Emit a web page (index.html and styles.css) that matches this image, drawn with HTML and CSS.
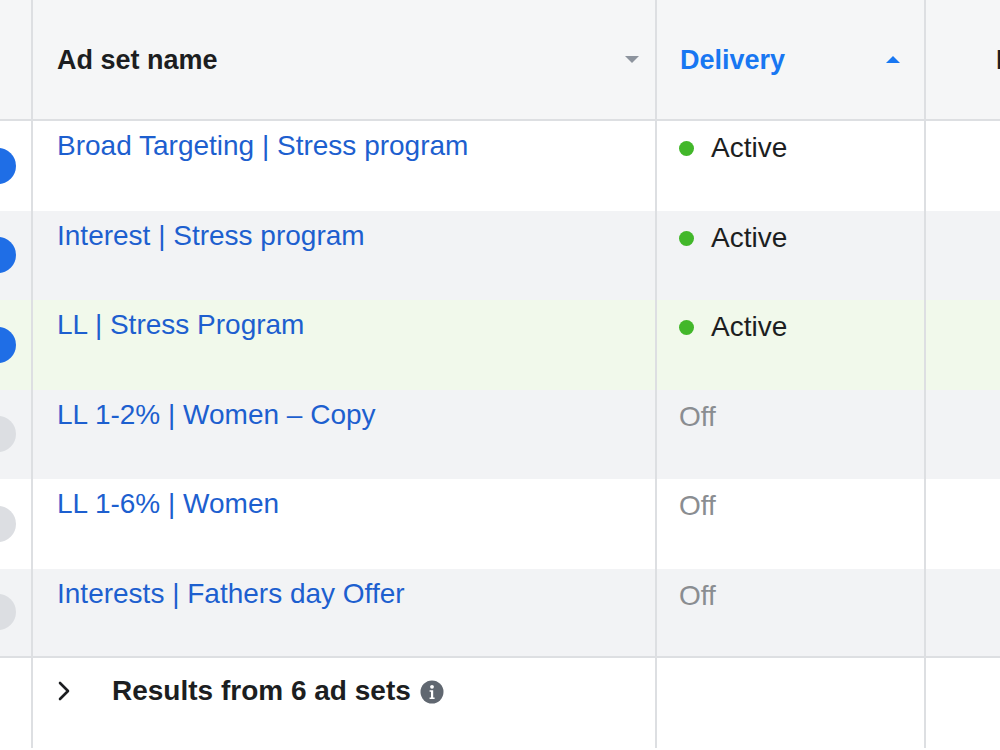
FILE: index.html
```html
<!DOCTYPE html>
<html lang="en">
<head>
    <meta charset="UTF-8">
    <meta name="viewport" content="width=device-width, initial-scale=1.0">
    <title>Ad sets</title>
    <link rel="stylesheet" href="styles.css">
</head>
<body>
    <div class="table">
        <div class="row head">
            <div class="cell check"></div>
            <div class="cell name">
                <span>Ad set name</span>
                <span class="sort down"></span>
            </div>
            <div class="cell delivery">
                <span class="sorted">Delivery</span>
                <span class="sort up"></span>
            </div>
            <div class="cell extra"><span>Budget</span></div>
        </div>

        <div class="row">
            <div class="cell check"><span class="knob on"></span></div>
            <div class="cell name"><a href="#">Broad Targeting | Stress program</a></div>
            <div class="cell delivery"><span class="dot"></span><span class="status">Active</span></div>
            <div class="cell extra"></div>
        </div>
        <div class="row grey">
            <div class="cell check"><span class="knob on"></span></div>
            <div class="cell name"><a href="#">Interest | Stress program</a></div>
            <div class="cell delivery"><span class="dot"></span><span class="status">Active</span></div>
            <div class="cell extra"></div>
        </div>
        <div class="row hover">
            <div class="cell check"><span class="knob on"></span></div>
            <div class="cell name"><a href="#">LL | Stress Program</a></div>
            <div class="cell delivery"><span class="dot"></span><span class="status">Active</span></div>
            <div class="cell extra"></div>
        </div>
        <div class="row grey">
            <div class="cell check"><span class="knob"></span></div>
            <div class="cell name"><a href="#">LL 1-2% | Women – Copy</a></div>
            <div class="cell delivery"><span class="status off">Off</span></div>
            <div class="cell extra"></div>
        </div>
        <div class="row">
            <div class="cell check"><span class="knob"></span></div>
            <div class="cell name"><a href="#">LL 1-6% | Women</a></div>
            <div class="cell delivery"><span class="status off">Off</span></div>
            <div class="cell extra"></div>
        </div>
        <div class="row grey last">
            <div class="cell check"><span class="knob"></span></div>
            <div class="cell name"><a href="#">Interests | Fathers day Offer</a></div>
            <div class="cell delivery"><span class="status off">Off</span></div>
            <div class="cell extra"></div>
        </div>

        <div class="row foot">
            <div class="cell check"></div>
            <div class="cell name">
                <svg class="chevron" width="14" height="20" viewBox="0 0 14 20">
                    <polyline points="3,2 11,10 3,18" fill="none" stroke="#1c1e21" stroke-width="2.6" stroke-linecap="round" stroke-linejoin="round"/>
                </svg>
                <span class="total">Results from 6 ad sets</span>
                <svg class="info" width="24" height="24" viewBox="0 0 24 24">
                    <circle cx="12" cy="12" r="11.5" fill="#606770"/>
                    <circle cx="12" cy="6.8" r="1.9" fill="#fff"/>
                    <path d="M9.6 10.2h3.6v7.2h1.4v1.6H9.6v-1.6h1.4v-5.6H9.6z" fill="#fff"/>
                </svg>
            </div>
            <div class="cell delivery"></div>
            <div class="cell extra"></div>
        </div>
    </div>
</body>
</html>
```

FILE: styles.css
```css
body {
    margin: 0;
    width: 1000px;
    height: 750px;
    overflow: hidden;
    background: #fff;
    font-family: "Liberation Sans", Arial, sans-serif;
    color: #1c1e21;
}

.table {
    width: 1100px;
}

.row {
    display: grid;
    grid-template-columns: 33px 624px 269px 1fr;
    height: 89.5px;
    background: #fff;
}

.row.grey {
    background: #f2f3f5;
}

.row.hover {
    background: #f1f9eb;
}

.row.last {
    height: 87.5px;
    border-bottom: 2px solid #dddfe2;
}

.cell {
    border-right: 2px solid #dddfe2;
    padding: 8px 0 0 24px;
    box-sizing: border-box;
    font-size: 28px;
    line-height: 34px;
    overflow: hidden;
    white-space: nowrap;
}

.cell.check {
    padding: 0;
    position: relative;
}

.cell.extra {
    border-right: none;
}

.cell.name a {
    color: #1d5fcf;
    text-decoration: none;
}

.cell.delivery {
    display: flex;
    align-items: flex-start;
    padding-top: 10px;
    padding-left: 22px;
}

/* header */
.row.head {
    height: 119px;
    background: #f5f6f7;
    border-bottom: 2px solid #dddfe2;
}

.row.head .cell {
    padding-top: 0;
    display: flex;
    align-items: center;
    font-size: 27px;
    font-weight: bold;
}

.row.head .cell.name {
    padding-right: 16px;
    justify-content: space-between;
}

.row.head .cell.delivery {
    padding-left: 23px;
    padding-right: 24px;
    justify-content: space-between;
}

.row.head .cell.extra {
    padding-left: 70px;
}

.sorted {
    color: #1877f2;
}

.sort {
    width: 0;
    height: 0;
    border-left: 7px solid transparent;
    border-right: 7px solid transparent;
}

.sort.down {
    border-top: 7px solid #8d949e;
}

.sort.up {
    border-bottom: 7px solid #1877f2;
}

/* toggle knobs, cut off at the left edge */
.knob {
    position: absolute;
    left: -20px;
    top: 50%;
    width: 36px;
    height: 36px;
    margin-top: -18px;
    border-radius: 50%;
    background: #dcdee2;
}

.knob.on {
    background: #1f6ee6;
}

.dot {
    width: 15px;
    height: 15px;
    border-radius: 50%;
    background: #42b72a;
    margin-top: 10px;
    margin-right: 17px;
}

.status {
    color: #1c1e21;
}

.status.off {
    color: #8a8d91;
}

/* footer */
.row.foot {
    height: 90px;
}

.row.foot .cell.name {
    display: flex;
    align-items: flex-start;
    padding-top: 16px;
}

.chevron {
    margin-top: 7px;
    margin-right: 41px;
}

.total {
    font-weight: bold;
    font-size: 28px;
}

.info {
    margin-top: 6px;
    margin-left: 9px;
}
```
